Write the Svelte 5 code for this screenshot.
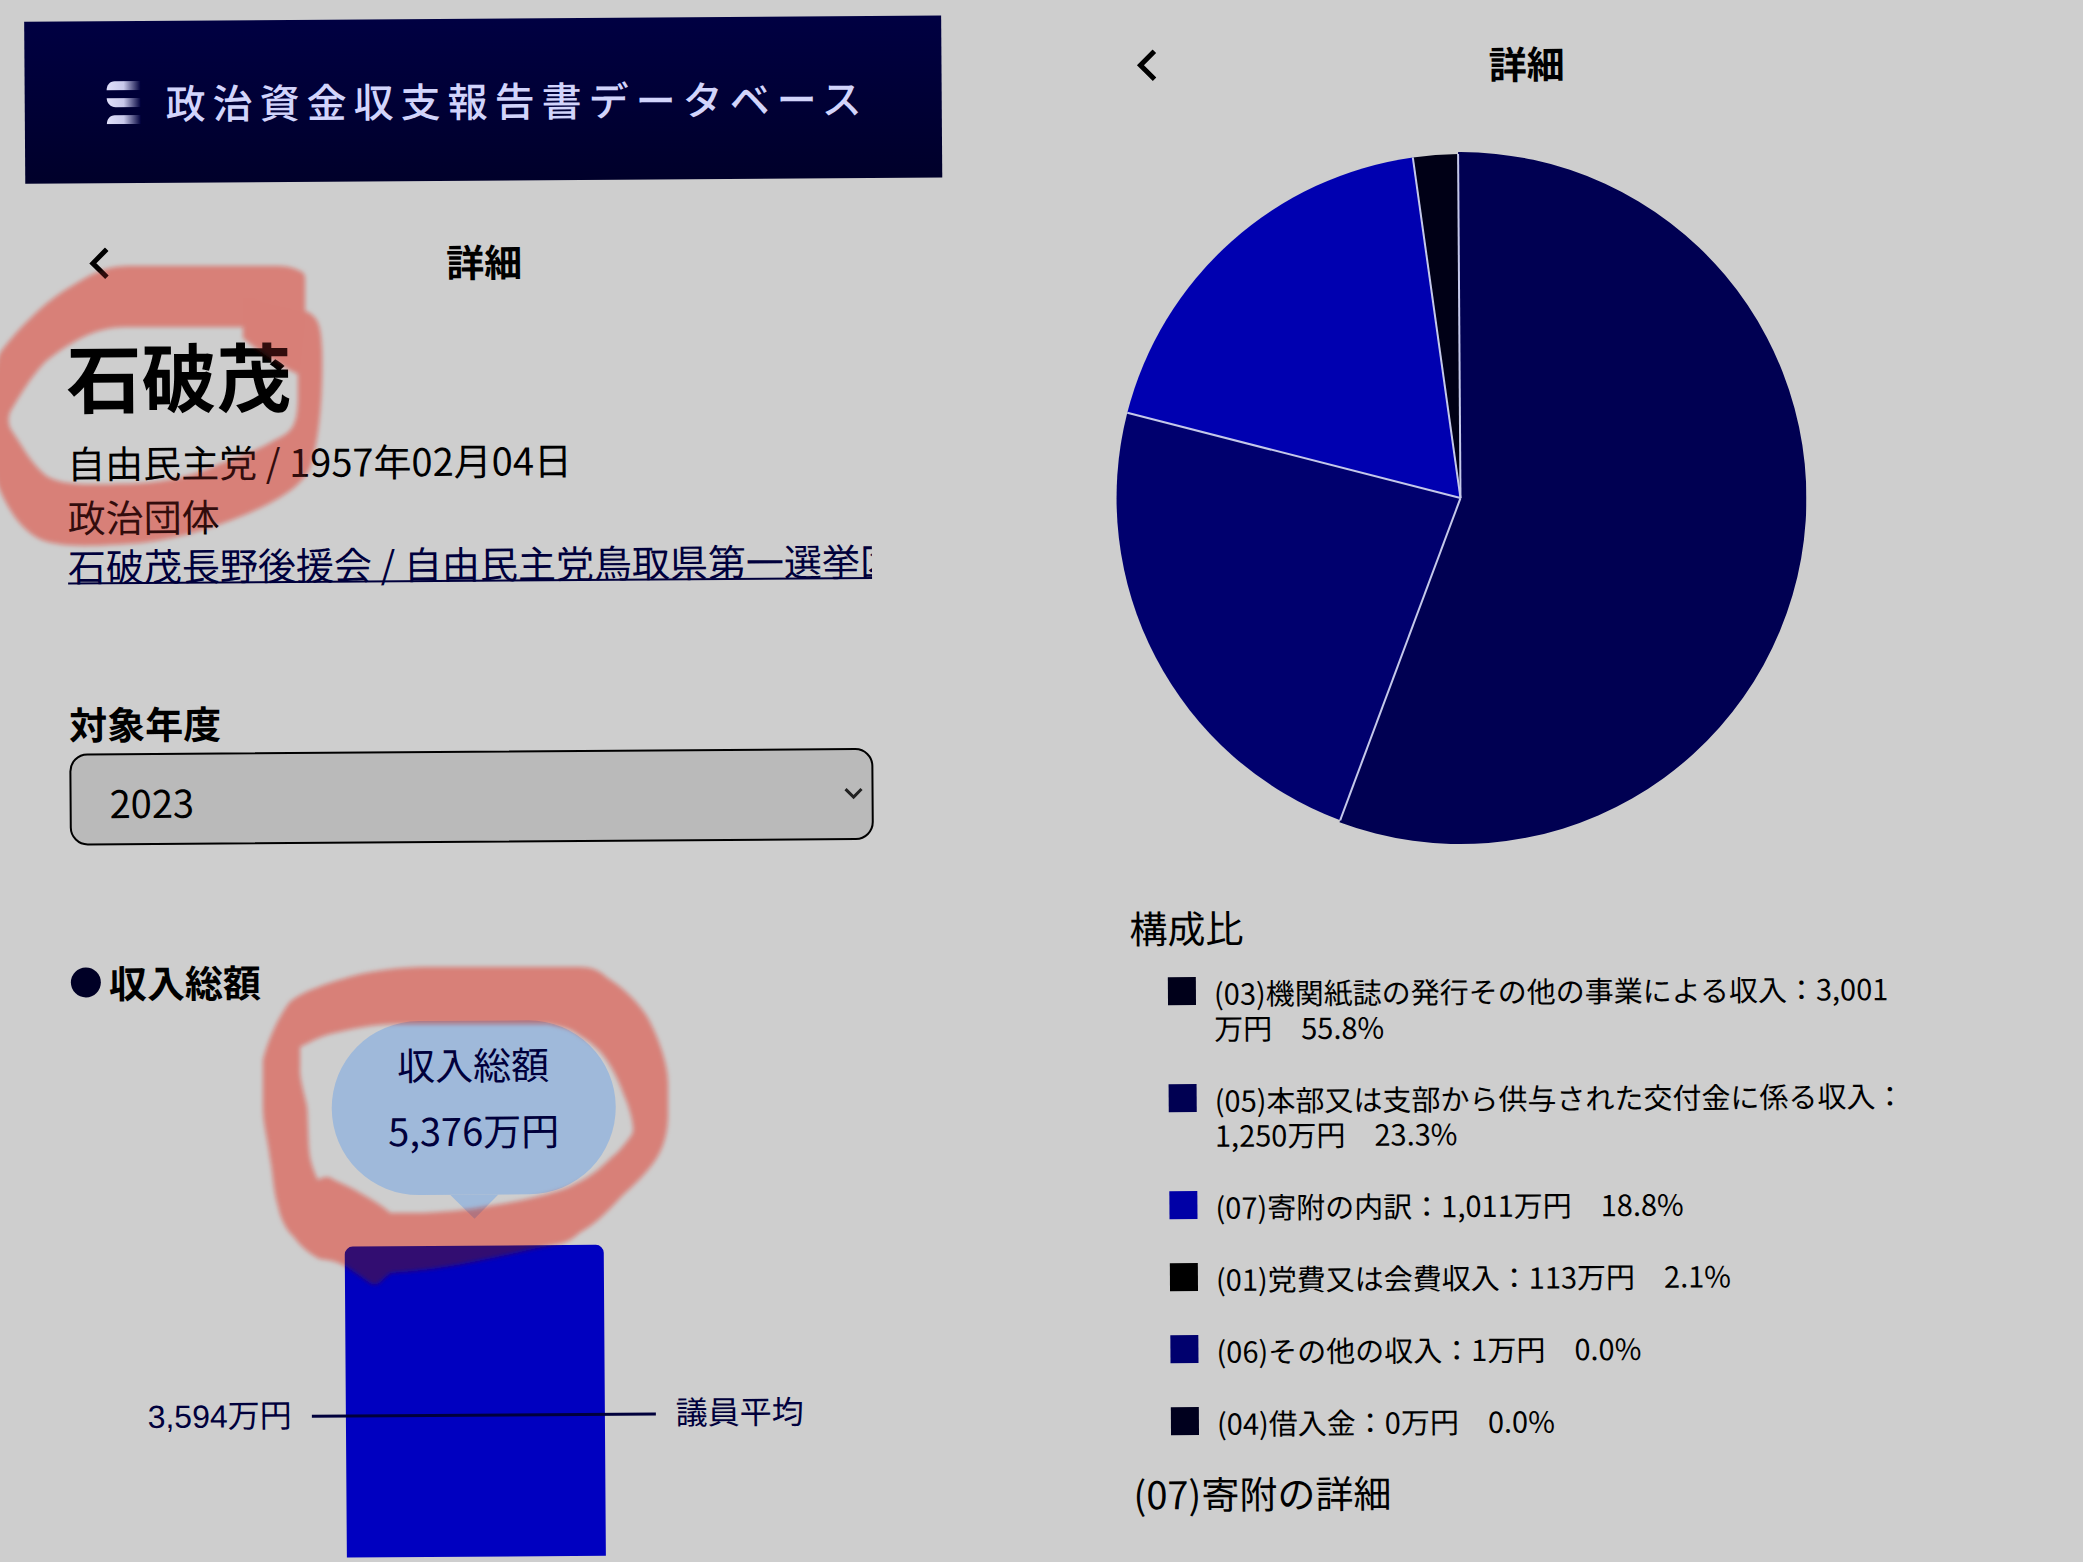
<script lang="ts">
  type Income = {
    label: string;
    amount: string;
    percent: number;
    color: string;
    slice: string;
  };

  const incomes: Income[] = [
    { label: '(03)機関紙誌の発行その他の事業による収入', amount: '3,001万円', percent: 55.8, color: '#00001a', slice: '#000052' },
    { label: '(05)本部又は支部から供与された交付金に係る収入', amount: '1,250万円', percent: 23.3, color: '#000052', slice: '#00006e' },
    { label: '(07)寄附の内訳', amount: '1,011万円', percent: 18.8, color: '#0000a6', slice: '#0000b0' },
    { label: '(01)党費又は会費収入', amount: '113万円', percent: 2.1, color: '#000000', slice: '#000016' },
    { label: '(06)その他の収入', amount: '1万円', percent: 0, color: '#00006e', slice: '#00006e' },
    { label: '(04)借入金', amount: '0万円', percent: 0, color: '#00001e', slice: '#00001e' },
  ];

  const years = ['2023', '2022', '2021'];
  let year = $state('2023');

  function point(share: number, r: number) {
    const a = (share / 100) * Math.PI * 2;
    return `${(346 + r * Math.sin(a)).toFixed(1)} ${(346 - r * Math.cos(a)).toFixed(1)}`;
  }

  function buildSlices(items: Income[]) {
    let start = 0;
    return items
      .filter((item) => item.percent > 0)
      .map((item, i) => {
        const end = start + item.percent;
        // the leading slice stands out a little
        const r = i === 0 ? 346 : 344;
        const large = item.percent > 50 ? 1 : 0;
        const slice = {
          d: `M346 346L${point(start, r)}A${r} ${r} 0 ${large} 1 ${point(end, r)}Z`,
          edge: `M346 346L${point(end, 344)}`,
          color: item.slice,
        };
        start = end;
        return slice;
      });
  }

  const slices = buildSlices(incomes);
</script>

{#snippet titleBar(wide: boolean)}
  <div class="title-bar" class:title-bar--wide={wide}>
    <button class="back" aria-label="戻る">
      <svg viewBox="0 0 20 32" width="20" height="32" aria-hidden="true">
        <path d="M18 2L4 16L18 30" fill="none" stroke="#000" stroke-width="5" />
      </svg>
    </button>
    <h2>詳細</h2>
  </div>
{/snippet}

{#snippet marks()}
  <g filter="url(#soft)">
    <path
      fill-rule="evenodd"
      d="M300 271C292 267 285 266 275 266H128C105 266 90 275 72 286C45 301 18 329 0 353C-10 376 -12 465 0 490C8 508 20 530 42 540C65 548 95 546 140 543C185 538 225 524 260 508C285 496 305 483 311 465C320 435 323 390 322 350C321 325 318 316 305 311V278Q305 273 300 271Z
         M125 327H243V338C260 352 280 366 298 374V400C297 425 293 432 275 440C255 452 235 458 215 466C190 477 160 484 120 484C90 485 60 486 45 475C30 462 22 446 10 428Q7 420 10 412C20 395 30 378 45 362C70 342 95 327 125 327Z"
    />
    <path opacity="0.3" d="M243 298H252C268 306 290 308 305 312V320L299 374C280 366 260 352 243 338Z" />
    <path
      fill-rule="evenodd"
      d="M263 1060C268 1040 278 1018 289 1003C300 992 330 982 361 974C390 968 410 967 432 967H579C592 967 600 971 606 977C622 987 636 1000 646 1015C658 1035 668 1065 668 1083V1118C667 1140 660 1155 651 1166C640 1180 630 1188 620 1198C605 1214 595 1224 579 1233C570 1242 560 1244 553 1245C525 1250 500 1257 477 1261C455 1266 420 1271 390 1273L379 1283Q375 1286 370 1283L347 1267C335 1260 328 1260 320 1259C310 1254 300 1246 294 1237C284 1228 280 1215 278 1206C273 1190 273 1172 270 1158C268 1140 263 1125 263 1107Z
         M300 1047C310 1042 320 1036 334 1033C355 1028 375 1024 396 1024H548C562 1027 570 1028 579 1035C592 1043 600 1050 606 1059C615 1072 620 1084 624 1095C629 1106 632 1118 633 1126Q634 1132 631 1136C625 1144 619 1152 611 1158C601 1168 590 1177 579 1182C569 1188 558 1191 548 1194C530 1199 510 1203 490 1206C468 1210 445 1212 423 1213H390C382 1206 372 1200 361 1194C352 1188 342 1184 334 1180Q327 1174 318 1180C314 1172 310 1162 309 1150C308 1136 308 1120 307 1107C304 1092 299 1078 300 1067Z"
    />
    <path opacity="0.25" d="M327 1177C333 1180 338 1182 343 1184C353 1188 362 1193 370 1198C379 1203 386 1208 392 1214C400 1220 404 1226 404 1233C402 1248 398 1262 392 1273L379 1283H370L347 1267C330 1258 315 1244 303 1230C304 1220 306 1210 307 1202Z" />
  </g>
{/snippet}

<main class="page" lang="ja">
  <section class="screen">
    <header class="banner">
      <svg class="logo" viewBox="0 0 36 44" width="36" height="44" aria-hidden="true">
        <defs>
          <linearGradient id="bar" x1="0" x2="1">
            <stop offset="0" stop-color="#e0e0fa" />
            <stop offset="0.5" stop-color="#c8c8ea" />
            <stop offset="1" stop-color="#00003c" />
          </linearGradient>
        </defs>
        <path fill="url(#bar)" d="M1 10C1 5 4 1 9 1H35V10Z" />
        <path fill="url(#bar)" d="M1 18H35V27H10C5 27 1 23 1 18Z" />
        <path fill="url(#bar)" d="M1 44C1 39 4 35 9 35H35V44Z" />
      </svg>
      <h1>政治資金収支報告書データベース</h1>
    </header>

    {@render titleBar(false)}

    <div class="profile">
      <p class="name">石破茂</p>
      <p class="line">自由民主党 / 1957年02月04日</p>
      <p class="line">政治団体</p>
      <a class="groups" href="#groups">石破茂長野後援会 / 自由民主党鳥取県第一選挙区支部</a>

      <div class="field">
        <label for="year">対象年度</label>
        <div class="select">
          <select id="year" bind:value={year}>
            {#each years as y}
              <option value={y}>{y}</option>
            {/each}
          </select>
          <svg viewBox="0 0 20 14" width="20" height="14" aria-hidden="true">
            <path d="M2 3L10 11L18 3" fill="none" stroke="#222" stroke-width="3" />
          </svg>
        </div>
      </div>

      <h3 class="total"><span class="dot"></span>収入総額</h3>

      <div class="chart">
        <div class="bubble">
          <p>収入総額</p>
          <p>5,376万円</p>
        </div>
        <div class="bar"></div>
        <div class="average">
          <span>3,594万円</span>
          <span class="average__rule"></span>
          <span>議員平均</span>
        </div>
      </div>
    </div>
  </section>

  <section class="screen screen--detail">
    {@render titleBar(true)}

    <div class="breakdown">
      <svg class="pie" viewBox="0 0 692 692" role="img" aria-label="構成比">
        {#each slices as slice}
          <path d={slice.d} fill={slice.color} />
        {/each}
        {#each slices as slice}
          <path d={slice.edge} stroke="#c4c8ea" stroke-width="2" />
        {/each}
      </svg>

      <h3>構成比</h3>
      <ul class="legend">
        {#each incomes as item}
          <li>
            <span class="swatch" style="background: {item.color}"></span>
            <span>{item.label}：{item.amount}　{item.percent.toFixed(1)}%</span>
          </li>
        {/each}
      </ul>
      <h3>(07)寄附の詳細</h3>
    </div>
  </section>

  <svg class="marker marker--multiply" viewBox="0 0 700 1300" aria-hidden="true">
    <defs>
      <filter id="soft" x="-5%" y="-5%" width="110%" height="110%">
        <feGaussianBlur stdDeviation="2" />
      </filter>
    </defs>
    {@render marks()}
  </svg>
  <svg class="marker marker--screen" viewBox="0 0 700 1300" aria-hidden="true">
    {@render marks()}
  </svg>
</main>

<style>
  :global(body) {
    margin: 0;
    background: #cecece;
  }

  .page {
    position: relative;
    isolation: isolate;
    overflow: hidden;
    min-height: 100vh;
    display: grid;
    grid-template-columns: 1fr 1fr;
    align-items: start;
    background: #cecece;
    color: #000;
    font-family: 'Noto Sans CJK JP', sans-serif;
    font-size: 38px;
    line-height: 54px;
  }

  h1,
  h2,
  h3,
  p,
  ul {
    margin: 0;
    padding: 0;
    font-size: inherit;
  }

  .screen {
    min-width: 0;
    padding: 22px 101px 0 24px;
    transform: rotate(-0.4deg);
    transform-origin: 0 0;
  }

  .screen--detail {
    padding-top: 36px;
  }

  .banner {
    display: flex;
    align-items: center;
    gap: 24px;
    height: 162px;
    padding-left: 81px;
    background: linear-gradient(#000042, #00002a);
    color: #d2d4fb;
    white-space: nowrap;
  }

  .banner h1 {
    font-size: 40px;
    font-weight: 500;
    letter-spacing: 7px;
  }

  .logo {
    flex: none;
  }

  .title-bar {
    display: grid;
    grid-template-columns: 1fr auto 1fr;
    align-items: center;
    height: 60px;
    padding: 0 63px;
  }

  .banner + .title-bar {
    margin-top: 50px;
  }

  .title-bar--wide {
    padding: 0 66px 0 70px;
  }

  .back {
    display: flex;
    justify-self: start;
    padding: 0;
    border: 0;
    background: none;
    cursor: pointer;
  }

  .profile {
    padding: 37px 73px 0 40px;
  }

  .name {
    margin-bottom: 15px;
    font-size: 75px;
    font-weight: 700;
    line-height: 90px;
  }

  .groups {
    display: block;
    overflow: hidden;
    color: #00003c;
    line-height: 44px;
    white-space: nowrap;
    text-decoration-thickness: 2px;
  }

  .field {
    display: grid;
    gap: 3px;
    margin-top: 109px;
  }

  .field label {
    font-weight: 700;
  }

  .select {
    position: relative;
  }

  .select select {
    appearance: none;
    display: block;
    box-sizing: border-box;
    width: 100%;
    height: 92px;
    padding: 6px 38px 0;
    border: 2px solid #000;
    border-radius: 18px;
    background: #bababa;
    color: #000;
    font: inherit;
  }

  .select svg {
    position: absolute;
    top: 38px;
    right: 10px;
    pointer-events: none;
  }

  .total {
    display: flex;
    align-items: center;
    gap: 8px;
    margin-top: 110px;
  }

  .dot {
    width: 30px;
    height: 30px;
    border-radius: 50%;
    background: #000026;
  }

  .chart {
    position: relative;
    display: flex;
    flex-direction: column;
    align-items: center;
    gap: 51px;
    margin-top: 14px;
    color: #00003c;
  }

  .bubble {
    position: relative;
    box-sizing: border-box;
    width: 284px;
    padding: 10px 0 32px;
    border-radius: 87px;
    background: #9fb9da;
    line-height: 66px;
    text-align: center;
  }

  .bubble::after {
    content: '';
    position: absolute;
    top: 100%;
    left: 50%;
    margin-left: -24px;
    border: 24px solid transparent;
    border-top-color: #9fb9da;
    border-bottom: 0;
  }

  .bar {
    width: 259px;
    height: 311px;
    border-radius: 8px 8px 0 0;
    background: #0000c0;
  }

  .average {
    position: absolute;
    bottom: 115px;
    left: 0;
    right: 0;
    display: flex;
    align-items: center;
    justify-content: center;
    gap: 20px;
    font-family: 'Liberation Sans', 'Noto Sans CJK JP', sans-serif;
    font-size: 32px;
    white-space: nowrap;
  }

  .average__rule {
    width: 344px;
    height: 3px;
    background: #00003c;
  }

  .breakdown {
    padding: 59px 79px 0 57px;
  }

  .pie {
    display: block;
    width: 100%;
    max-width: 692px;
    margin: 0 0 54px -12px;
  }

  .breakdown h3 {
    font-weight: 400;
  }

  .legend {
    display: grid;
    gap: 37px;
    margin: 21px 0 26px;
    padding-left: 38px;
    font-size: 29px;
    line-height: 35px;
    list-style: none;
  }

  .legend li {
    display: flex;
    gap: 18px;
  }

  .swatch {
    flex: none;
    width: 28px;
    height: 28px;
    margin-top: 2px;
  }

  .marker {
    position: absolute;
    top: 0;
    left: 0;
    width: 700px;
    height: 1300px;
    pointer-events: none;
  }

  .marker--multiply {
    fill: #ff968c;
    mix-blend-mode: multiply;
  }

  .marker--screen {
    fill: #32100d;
    mix-blend-mode: screen;
  }
</style>
